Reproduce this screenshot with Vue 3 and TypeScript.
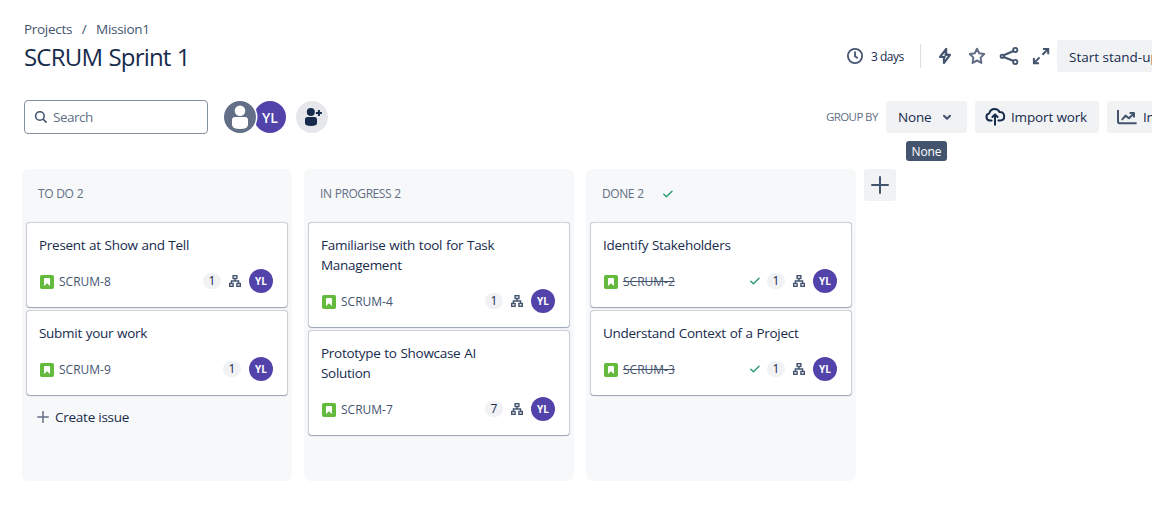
<script setup lang="ts">
interface Issue {
  key: string
  title: string
  points: number
  hasChildren: boolean
}

interface Column {
  name: string
  done: boolean
  canCreate: boolean
  issues: Issue[]
}

const columns: Column[] = [
  {
    name: 'TO DO',
    done: false,
    canCreate: true,
    issues: [
      { key: 'SCRUM-8', title: 'Present at Show and Tell', points: 1, hasChildren: true },
      { key: 'SCRUM-9', title: 'Submit your work', points: 1, hasChildren: false },
    ],
  },
  {
    name: 'IN PROGRESS',
    done: false,
    canCreate: false,
    issues: [
      { key: 'SCRUM-4', title: 'Familiarise with tool for Task Management', points: 1, hasChildren: true },
      { key: 'SCRUM-7', title: 'Prototype to Showcase AI Solution', points: 7, hasChildren: true },
    ],
  },
  {
    name: 'DONE',
    done: true,
    canCreate: false,
    issues: [
      { key: 'SCRUM-2', title: 'Identify Stakeholders', points: 1, hasChildren: true },
      { key: 'SCRUM-3', title: 'Understand Context of a Project', points: 1, hasChildren: true },
    ],
  },
]
</script>

<template>
  <main class="page">
    <header class="header">
      <div class="heading">
        <nav class="crumbs"><span>Projects</span><span class="slash">/</span><span class="crumb-last">Mission1</span></nav>
        <h1>SCRUM Sprint 1</h1>
      </div>
      <div class="actions">
        <svg class="clock" width="16" height="16" viewBox="0 0 16 16" fill="none" stroke="#44546f" stroke-width="1.8">
          <circle cx="8" cy="8" r="7.1" />
          <path d="M8 3.6V8.3L10.8 10.2" />
        </svg>
        <span class="days">3 days</span>
        <span class="divider"></span>
        <div class="icons">
          <svg width="24" height="24" viewBox="0 0 24 24" fill="none" stroke="#44546f" stroke-width="2.1" stroke-linejoin="round">
            <path d="M13.2 4.8V10.8H17L10.9 19V13H7Z" />
            <path d="M11.4 10.8H16M8 13H12.6" />
          </svg>
          <svg width="24" height="24" viewBox="0 0 24 24" fill="none" stroke="#626f86" stroke-width="2" stroke-linejoin="round">
            <path d="M12 4.7 14.2 9.3 19.2 10 15.6 13.6 16.4 18.9 12 16.5 7.6 18.9 8.4 13.6 4.8 10 9.8 9.3Z" />
          </svg>
          <svg width="24" height="24" viewBox="0 0 24 24" fill="none" stroke="#44546f" stroke-width="1.9">
            <circle cx="5.2" cy="12.2" r="1.6" />
            <circle cx="18.3" cy="6" r="2.1" />
            <circle cx="18.3" cy="18" r="2.1" />
            <path d="M6.6 11.3 16.6 6.9M6.6 13.1 16.6 17.1" stroke-width="2.2" />
          </svg>
          <svg width="24" height="24" viewBox="0 0 24 24" fill="none" stroke="#44546f" stroke-width="2">
            <path d="M14 5H19.2V10.2M19 5.2 13.4 10.8M10 19.2H4.9V14M5.1 19 10.6 13.4" />
          </svg>
        </div>
        <button class="btn standup">Start stand-up</button>
      </div>
    </header>

    <section class="toolbar">
      <div class="search">
        <svg width="14" height="14" viewBox="0 0 14 14" fill="none" stroke="#44546f" stroke-width="1.6" stroke-linecap="round">
          <circle cx="5.9" cy="6" r="4.3" />
          <path d="M9.2 9.3 12 12.1" />
        </svg>
        <span>Search</span>
      </div>
      <div class="people">
        <span class="person unassigned">
          <svg width="32" height="32" viewBox="0 0 32 32" fill="#fff">
            <circle cx="16" cy="9.8" r="5.3" />
            <path d="M8 19a3 3 0 0 1 3-3H21a3 3 0 0 1 3 3V23.5Q24 28 16 28T8 23.5Z" />
          </svg>
        </span>
        <span class="person initials">YL</span>
      </div>
      <span class="person add">
        <svg width="32" height="32" viewBox="0 0 32 32" fill="#172b4d">
          <circle cx="14.8" cy="11" r="4" />
          <path d="M9 18.5a2.5 2.5 0 0 1 2.5-2.5H18.5a2.5 2.5 0 0 1 2.5 2.5V22.3Q21 25 15 25T9 22.3Z" />
          <path d="M22.9 9V15M19.9 12H25.9" stroke="#172b4d" stroke-width="2" />
        </svg>
      </span>
      <div class="tools">
        <span class="group-label">GROUP BY</span>
        <button class="btn group">
          <span>None</span>
          <svg width="10" height="8" viewBox="0 0 10 8" fill="none" stroke="#44546f" stroke-width="2.1" stroke-linecap="round" stroke-linejoin="round">
            <path d="M2 2.8 5 5.7 8 2.8" />
          </svg>
          <span class="tooltip">None</span>
        </button>
        <button class="btn import">
          <svg width="22" height="20" viewBox="0 0 22 20" fill="none" stroke="#172b4d" stroke-width="2" stroke-linecap="round" stroke-linejoin="round">
            <path d="M6.6 13.4H4.8A3.6 3.6 0 0 1 4.3 6.3C5 3.6 6.9 2 9.6 2C12.1 2 13.7 3.2 14.5 5C17.6 4.8 19.2 6.8 19.2 9.2C19.2 11.8 17.4 13.4 15.2 13.4H13.4" />
            <path d="M10 17.8V7.6M7.4 10 10 7.4 12.6 10" />
          </svg>
          <span>Import work</span>
        </button>
        <button class="btn insights">
          <svg width="20" height="16" viewBox="0 0 20 16" fill="none" stroke="#44546f" stroke-width="2" stroke-linejoin="round">
            <path d="M1 1V12.4Q1 14.2 2.8 14.2H19.6" />
            <path d="M4.8 10.8 8.5 6.6 12 9.3 16.6 4.6M12.6 4H17V8.4" />
          </svg>
          <span>Insights</span>
        </button>
      </div>
    </section>

    <section class="board">
      <div v-for="column in columns" :key="column.name" class="column">
        <div class="column-head">
          <span>{{ column.name }} {{ column.issues.length }}</span>
          <svg v-if="column.done" class="tick" width="12" height="10" viewBox="0 0 12 10" fill="none" stroke="#2f9e70" stroke-width="1.5" stroke-linecap="round" stroke-linejoin="round">
            <path d="M1.8 5.3 4.4 7.7 10 2.3" />
          </svg>
        </div>
        <article v-for="issue in column.issues" :key="issue.key" class="card">
          <p class="card-title">{{ issue.title }}</p>
          <div class="card-foot">
            <svg class="story" width="14" height="14" viewBox="0 0 14 14">
              <rect width="14" height="14" rx="1.8" fill="#63ba3c" />
              <path d="M4 4a1 1 0 0 1 1-1H9a1 1 0 0 1 1 1V11L7 8.2 4 11Z" fill="#fff" />
            </svg>
            <span class="key" :class="{ struck: column.done }">{{ issue.key }}</span>
            <svg v-if="column.done" class="done-tick" width="12" height="10" viewBox="0 0 12 10" fill="none" stroke="#2f9e70" stroke-width="1.5" stroke-linecap="round" stroke-linejoin="round">
              <path d="M1.8 5.3 4.4 7.7 10 2.3" />
            </svg>
            <span class="points">{{ issue.points }}</span>
            <svg v-if="issue.hasChildren" class="tree" width="12" height="12" viewBox="0 0 12 12" fill="none" stroke="#44546f" stroke-width="1.4">
              <rect x="4.1" y="0.7" width="3.8" height="2.8" />
              <rect x="0.7" y="8.5" width="3.4" height="2.8" />
              <rect x="7.9" y="8.5" width="3.4" height="2.8" />
              <path d="M6 3.6V6M2.4 8.6V6H9.6V8.6" />
            </svg>
            <span class="assignee">YL</span>
          </div>
        </article>
        <div v-if="column.canCreate" class="create">
          <svg width="12" height="12" viewBox="0 0 12 12" stroke="#626f86" stroke-width="1.5" stroke-linecap="round">
            <path d="M6 .7V11.3M.7 6H11.3" />
          </svg>
          <span>Create issue</span>
        </div>
      </div>
      <button class="btn add-column">
        <svg width="18" height="18" viewBox="0 0 18 18" stroke="#44546f" stroke-width="2" stroke-linecap="round">
          <path d="M9 1V17M1 9H17" />
        </svg>
      </button>
    </section>
  </main>
</template>

<style>
body {
  margin: 0;
  background: #fff;
}
</style>

<style scoped>
.page {
  box-sizing: border-box;
  width: 1152px;
  height: 507px;
  overflow: hidden;
  color: #172b4d;
  font-family: 'Open Sans', 'Noto Sans', sans-serif;
  font-size: 13.5px;
}
svg {
  display: block;
  flex: none;
}
.header {
  display: flex;
  justify-content: space-between;
  height: 100px;
}
.heading {
  padding: 19px 0 0 24px;
}
.crumbs {
  display: flex;
  line-height: 20px;
  color: #44546f;
  letter-spacing: -0.3px;
}
.slash {
  width: 24px;
  text-align: center;
}
h1 {
  margin: 4px 0 0;
  font-size: 24px;
  font-weight: 400;
  line-height: 28px;
  letter-spacing: -0.8px;
  word-spacing: 0.8px;
}
.actions {
  display: flex;
  align-items: center;
  width: 305px;
  height: 32px;
  margin-top: 40px;
}
.days {
  width: 49px;
  margin-left: 8px;
  font-size: 12px;
  letter-spacing: -0.5px;
  flex: none;
}
.divider {
  flex: none;
  width: 1px;
  height: 24px;
  margin-right: 12px;
  background: #dcdfe4;
}
.icons {
  display: flex;
  gap: 8px;
  margin-right: 4px;
}
.btn {
  display: flex;
  align-items: center;
  flex: none;
  box-sizing: border-box;
  height: 32px;
  padding: 0 12px;
  border: 0;
  border-radius: 3px;
  background: #f1f2f4;
  color: #172b4d;
  font: inherit;
  letter-spacing: -0.15px;
  white-space: nowrap;
}
.standup {
  padding-top: 1px;
  letter-spacing: 0;
}
.toolbar {
  display: flex;
  align-items: center;
  height: 34px;
  padding-left: 24px;
}
.search {
  display: flex;
  align-items: center;
  gap: 5px;
  box-sizing: border-box;
  width: 184px;
  height: 34px;
  padding-left: 9px;
  border: 1px solid #8590a2;
  border-radius: 4px;
  color: #626f86;
  letter-spacing: -0.5px;
}
.people {
  display: flex;
  margin-left: 16px;
}
.person {
  display: flex;
  align-items: center;
  justify-content: center;
  width: 32px;
  height: 32px;
  border-radius: 50%;
}
.unassigned {
  z-index: 1;
  background: #626f86;
  box-shadow: 0 0 0 1.5px #fff;
}
.initials {
  margin-left: -2px;
  background: #5243aa;
  color: #fff;
  font-size: 14px;
  font-weight: 600;
}
.add {
  margin-left: 10px;
  background: #e6e7ea;
}
.tools {
  display: flex;
  align-items: center;
  width: 326px;
  margin-left: auto;
}
.group-label {
  flex: none;
  width: 60px;
  color: #626f86;
  font-size: 11.5px;
  line-height: 16px;
  letter-spacing: -0.6px;
  white-space: nowrap;
}
.group {
  position: relative;
  justify-content: space-between;
  width: 81px;
  padding-right: 15px;
}
.tooltip {
  position: absolute;
  top: 40px;
  left: 20px;
  width: 41px;
  height: 20px;
  border-radius: 3px;
  background: #44546f;
  color: #fff;
  font-size: 12px;
  line-height: 21px;
  text-align: center;
}
.import {
  gap: 4px;
  width: 124px;
  margin-left: 8px;
  padding: 0 0 0 10px;
}
.insights {
  gap: 6px;
  margin-left: 8px;
  padding-left: 10px;
}
.board {
  display: flex;
  align-items: flex-start;
  gap: 12px;
  padding: 35px 0 0 22px;
}
.column {
  box-sizing: border-box;
  width: 270px;
  height: 312px;
  padding: 0 5px;
  border-radius: 6px;
  background: #f7f8f9;
}
.column-head {
  display: flex;
  align-items: center;
  height: 49px;
  margin-bottom: 5px;
  padding-left: 11px;
  color: #626f86;
  font-size: 12px;
  letter-spacing: -0.45px;
  word-spacing: 0.6px;
}
.tick {
  margin: 1px 0 0 18px;
}
.card {
  box-sizing: border-box;
  margin-bottom: 4px;
  padding: 12px 14px 14px 12px;
  border-radius: 3px;
  background: #fff;
  box-shadow: 0 1px 1px #091e4240, 0 0 1px 0.2px #091e4230;
}
.card-title {
  width: 204px;
  margin: 0 0 14px;
  line-height: 20px;
  letter-spacing: -0.28px;
  word-spacing: 0.5px;
}
.card-foot {
  display: flex;
  align-items: center;
  height: 24px;
}
.story {
  margin: 2px 5px 0 1px;
}
.key {
  margin-right: auto;
  color: #44546f;
  font-size: 12px;
}
.struck {
  text-decoration: line-through;
}
.done-tick {
  margin-right: 6px;
}
.points {
  width: 18px;
  border-radius: 8px;
  background: #f1f2f4;
  font-size: 12px;
  line-height: 16px;
  text-align: center;
}
.tree {
  margin-left: 8px;
}
.assignee {
  width: 24px;
  margin-left: 8px;
  border-radius: 50%;
  background: #5243aa;
  color: #fff;
  font-size: 10px;
  font-weight: 700;
  line-height: 24px;
  text-align: center;
}
.create {
  display: flex;
  align-items: center;
  gap: 6px;
  height: 36px;
  padding-left: 10px;
  letter-spacing: -0.25px;
}
.add-column {
  width: 32px;
  margin-left: -4px;
  padding: 0 7px;
}
</style>
